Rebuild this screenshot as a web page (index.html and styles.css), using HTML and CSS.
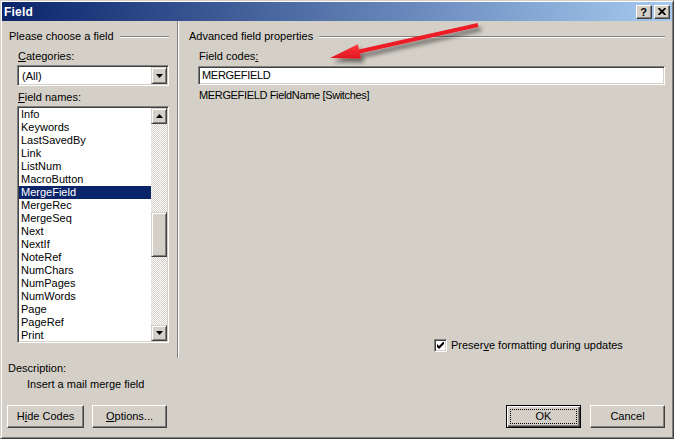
FILE: index.html
```html
<!DOCTYPE html>
<html>
<head>
<meta charset="utf-8">
<link rel="stylesheet" href="styles.css">
</head>
<body>
<div class="window">
  <div class="titlebar">
    <span class="title">Field</span>
    <div class="tbtns">
      <span class="tbtn help">?</span>
      <span class="tbtn close"><svg width="8" height="7" viewBox="0 0 8 7"><path d="M0.5 0 L7.5 7 M7.5 0 L0.5 7" stroke="#000" stroke-width="1.8"/></svg></span>
    </div>
  </div>

  <div class="main">
    <section class="left">
      <div class="ghead"><span>Please choose a field</span><i class="gline"></i></div>
      <div class="inner">
        <div class="lbl lbl-first"><u>C</u>ategories:</div>
        <div class="combo">
          <span class="ctext">(All)</span>
          <span class="rbtn dbtn"><svg width="7" height="4" viewBox="0 0 7 4"><polygon points="0,0 7,0 3.5,4" fill="#000"/></svg></span>
        </div>
        <div class="lbl lbl-second"><u>F</u>ield names:</div>
        <div class="listbox">
          <ul class="items">
            <li>Info</li>
            <li>Keywords</li>
            <li>LastSavedBy</li>
            <li>Link</li>
            <li>ListNum</li>
            <li>MacroButton</li>
            <li class="sel">MergeField</li>
            <li>MergeRec</li>
            <li>MergeSeq</li>
            <li>Next</li>
            <li>NextIf</li>
            <li>NoteRef</li>
            <li>NumChars</li>
            <li>NumPages</li>
            <li>NumWords</li>
            <li>Page</li>
            <li>PageRef</li>
            <li class="last">Print</li>
          </ul>
          <div class="vscroll">
            <span class="rbtn sbtn"><svg width="7" height="4" viewBox="0 0 7 4"><polygon points="3.5,0 7,4 0,4" fill="#000"/></svg></span>
            <div class="track"><span class="rbtn thumb"></span></div>
            <span class="rbtn sbtn"><svg width="7" height="4" viewBox="0 0 7 4"><polygon points="0,0 7,0 3.5,4" fill="#000"/></svg></span>
          </div>
        </div>
      </div>
    </section>

    <div class="vsep"></div>

    <section class="right">
      <div class="ghead"><span>Advanced field properties</span><i class="gline"></i></div>
      <div class="inner rinner">
        <div class="lbl lbl-first">Field codes<u>:</u></div>
        <div class="textbox">MERGEFIELD</div>
        <div class="syntax">MERGEFIELD FieldName [Switches]</div>
        <label class="check">
          <span class="cbox"><svg width="7" height="7" viewBox="0 0 7 7"><polygon points="0,2 2,4 7,-1 7,2 2,7 0,5" fill="#000"/></svg></span>
          <span>Preser<u>v</u>e formatting during updates</span>
        </label>
      </div>
    </section>
  </div>

  <div class="desc">
    <div>Description:</div>
    <div class="desc-text">Insert a mail merge field</div>
  </div>

  <div class="footer">
    <span class="btn hide">H<u>i</u>de Codes</span>
    <span class="btn opts"><u>O</u>ptions...</span>
    <span class="spacer"></span>
    <span class="btn ok"><span class="focus">OK</span></span>
    <span class="btn cancel">Cancel</span>
  </div>

  <svg class="arrow" width="180" height="60" viewBox="0 0 180 60">
    <defs>
      <filter id="sh" x="-20%" y="-40%" width="140%" height="200%">
        <feDropShadow dx="3" dy="4" stdDeviation="2" flood-color="#000" flood-opacity="0.5"/>
      </filter>
      <linearGradient id="rg" x1="0" y1="0" x2="0" y2="1">
        <stop offset="0" stop-color="#ff3a40"/>
        <stop offset="1" stop-color="#e0161e"/>
      </linearGradient>
    </defs>
    <g filter="url(#sh)">
      <line x1="158" y1="10" x2="37" y2="37" stroke="#ee1c25" stroke-width="4"/>
      <polygon points="10,43 37.8,29.2 41,43.6" fill="url(#rg)"/>
    </g>
  </svg>
</div>
</body>
</html>
```

FILE: styles.css
```css
html, body {
  margin: 0;
  padding: 0;
  background: #D4D0C8;
}

.window {
  position: relative;
  width: 674px;
  height: 439px;
  box-sizing: border-box;
  border: 1px solid;
  border-color: #D4D0C8 #404040 #404040 #D4D0C8;
  box-shadow: inset 1px 1px #fff, inset -1px -1px #808080;
  padding: 1px;
  background: #D4D0C8;
  display: flex;
  flex-direction: column;
  font: 11px "Liberation Sans", Arial, sans-serif;
  color: #000;
}

u { text-decoration: underline; text-underline-offset: 1px; }

/* Title bar */
.titlebar {
  height: 19px;
  flex: none;
  background: linear-gradient(to right, #0A246A, #A6CAF0);
  display: flex;
  align-items: center;
  justify-content: space-between;
  padding: 0 2px 0 2px;
}
.title {
  color: #fff;
  font-weight: bold;
  font-size: 12px;
  letter-spacing: 0.2px;
}
.tbtns { display: flex; gap: 2px; }
.tbtn {
  width: 16px;
  height: 14px;
  box-sizing: border-box;
  border: 1px solid;
  border-color: #fff #404040 #404040 #fff;
  box-shadow: inset -1px -1px #808080;
  background: #D4D0C8;
  display: flex;
  align-items: center;
  justify-content: center;
}
.help {
  font-weight: bold;
  font-size: 11px;
  line-height: 12px;
  padding-right: 1px;
}

/* Main area */
.main {
  display: flex;
  height: 337px;
  flex: none;
}
.left {
  width: 175px;
  box-sizing: border-box;
  padding: 9px 8px 0 7px;
}
.vsep {
  width: 2px;
  box-sizing: border-box;
  border-left: 1px solid #808080;
  border-right: 1px solid #fff;
}
.right {
  flex: 1;
  box-sizing: border-box;
  padding: 9px 7px 6px 10px;
  display: flex;
  flex-direction: column;
}

.ghead {
  display: flex;
  align-items: center;
  height: 13px;
  line-height: 13px;
}
.gline {
  flex: 1;
  margin-left: 6px;
  border-top: 1px solid #808080;
  border-bottom: 1px solid #fff;
}

.inner { padding-left: 8px; }
.rinner {
  padding-left: 9px;
  flex: 1;
  display: flex;
  flex-direction: column;
}

.lbl {
  height: 13px;
  line-height: 13px;
  padding-left: 1px;
}
.lbl-first { margin-top: 7px; }
.lbl-second { margin-top: 5px; }

.combo {
  margin-top: 2px;
  width: 152px;
  height: 21px;
  box-sizing: border-box;
  border: 1px solid;
  border-color: #808080 #fff #fff #808080;
  box-shadow: inset 1px 1px #404040, inset -1px -1px #D4D0C8;
  background: #fff;
  display: flex;
  align-items: center;
  padding: 1px;
}
.ctext { flex: 1; padding-left: 3px; }

.rbtn {
  box-sizing: border-box;
  border: 1px solid;
  border-color: #D4D0C8 #404040 #404040 #D4D0C8;
  box-shadow: inset 1px 1px #fff, inset -1px -1px #808080;
  background: #D4D0C8;
  display: flex;
  align-items: center;
  justify-content: center;
}
.dbtn {
  width: 16px;
  height: 17px;
}

.listbox {
  margin-top: 2px;
  width: 152px;
  height: 237px;
  box-sizing: border-box;
  border: 1px solid;
  border-color: #808080 #fff #fff #808080;
  box-shadow: inset 1px 1px #404040, inset -1px -1px #D4D0C8;
  background: #fff;
  display: flex;
  padding: 1px;
}
.items {
  flex: 1;
  list-style: none;
  margin: 0;
  padding: 0;
  overflow: hidden;
}
.items li {
  height: 13px;
  line-height: 13px;
  padding-left: 2px;
  white-space: nowrap;
}
.items li.last {
  height: 12px;
  line-height: 12px;
}
.items .sel {
  background: #0A246A;
  color: #fff;
}
.vscroll {
  width: 16px;
  display: flex;
  flex-direction: column;
}
.sbtn {
  width: 16px;
  height: 16px;
  flex: none;
}
.track {
  flex: 1;
  background-color: #D4D0C8;
  background-image: conic-gradient(#fff 25%, #D4D0C8 0 50%, #fff 0 75%, #D4D0C8 0);
  background-size: 2px 2px;
  display: flex;
  flex-direction: column;
}
.thumb {
  margin-top: 88px;
  height: 45px;
  width: 16px;
}

.textbox {
  margin-top: 3px;
  height: 19px;
  box-sizing: border-box;
  border: 1px solid;
  border-color: #808080 #fff #fff #808080;
  box-shadow: inset 1px 1px #404040, inset -1px -1px #D4D0C8;
  background: #fff;
  line-height: 17px;
  padding-left: 3px;
  letter-spacing: -0.3px;
}
.syntax {
  margin-top: 4px;
  height: 13px;
  line-height: 13px;
  padding-left: 1px;
  letter-spacing: -0.35px;
}

.check {
  margin-top: auto;
  margin-left: 236px;
  display: flex;
  align-items: center;
  height: 13px;
  line-height: 13px;
}
.cbox {
  width: 13px;
  height: 13px;
  box-sizing: border-box;
  border: 1px solid;
  border-color: #808080 #fff #fff #808080;
  box-shadow: inset 1px 1px #404040, inset -1px -1px #D4D0C8;
  background: #fff;
  display: flex;
  align-items: center;
  justify-content: center;
  margin-right: 4px;
}

/* Description */
.desc {
  padding: 4px 0 0 6px;
  line-height: 13px;
}
.desc-text {
  margin-top: 3px;
  padding-left: 19px;
}

/* Buttons */
.footer {
  display: flex;
  margin-top: 14px;
  padding: 0 7px 0 5px;
}
.spacer { flex: 1; }
.btn {
  width: 75px;
  height: 23px;
  box-sizing: border-box;
  border: 1px solid;
  border-color: #fff #404040 #404040 #fff;
  box-shadow: inset -1px -1px #808080;
  display: flex;
  align-items: center;
  justify-content: center;
  line-height: 13px;
}
.hide { width: 77px; }
.opts { margin-left: 8px; }
.ok {
  border: 1px solid #000;
  box-shadow: inset 1px 1px #fff, inset -1px -1px #404040, inset -2px -2px #808080;
  padding: 3px;
}
.focus {
  flex: 1;
  align-self: stretch;
  border: 1px dotted #000;
  display: flex;
  align-items: center;
  justify-content: center;
}
.cancel { margin-left: 9px; }

.arrow {
  position: absolute;
  left: 319px;
  top: 14px;
  pointer-events: none;
  overflow: visible;
}
```
